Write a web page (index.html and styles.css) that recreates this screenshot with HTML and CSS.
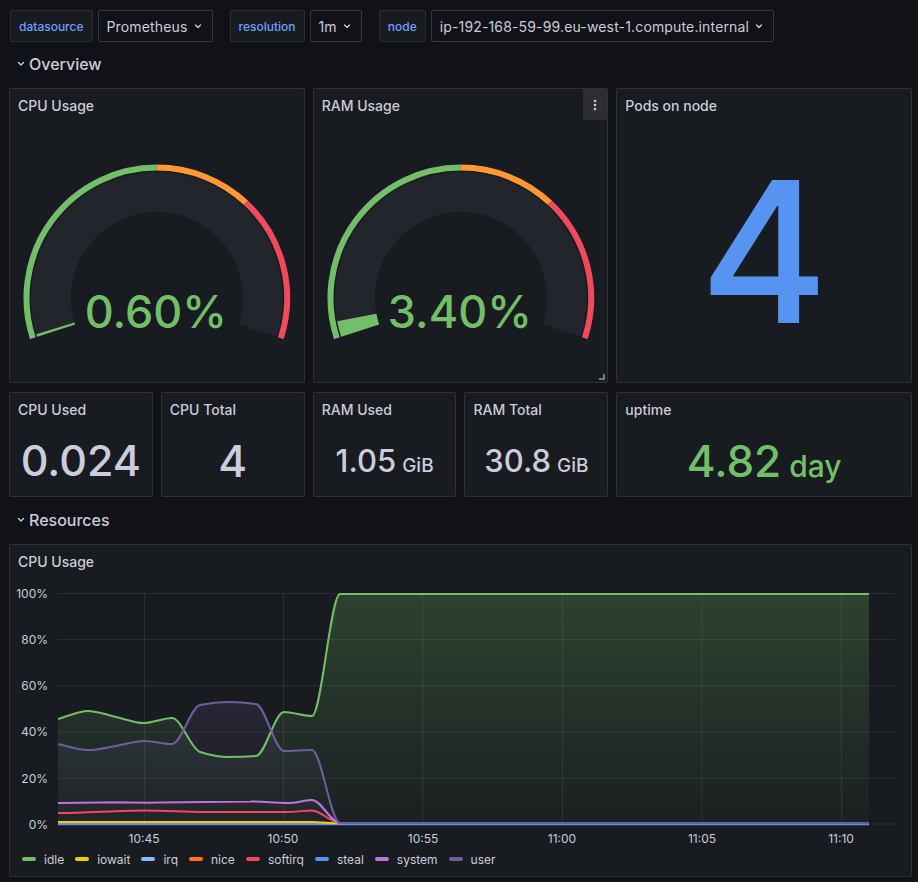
FILE: index.html
```html
<!DOCTYPE html>
<html>
<head>
<meta charset="utf-8">
<link rel="stylesheet" href="styles.css">
</head>
<body>
<div class="page">
  <div class="vars">
    <div class="var">
      <span class="var-label">datasource</span>
      <span class="var-select">Prometheus<svg class="chev" viewBox="0 0 12 12"><path d="M3.5 5 L6 7.5 L8.5 5"/></svg></span>
    </div>
    <div class="var">
      <span class="var-label">resolution</span>
      <span class="var-select">1m<svg class="chev" viewBox="0 0 12 12"><path d="M3.5 5 L6 7.5 L8.5 5"/></svg></span>
    </div>
    <div class="var">
      <span class="var-label">node</span>
      <span class="var-select">ip-192-168-59-99.eu-west-1.compute.internal<svg class="chev" viewBox="0 0 12 12"><path d="M3.5 5 L6 7.5 L8.5 5"/></svg></span>
    </div>
  </div>

  <div class="row-head"><svg class="row-chev" viewBox="0 0 8 8"><path d="M1.5 2.5 L4 5 L6.5 2.5"/></svg>Overview</div>

  <div class="grid">
    <div class="panel span2 big">
      <div class="panel-title">CPU Usage</div>
      <div class="panel-body">
        <svg class="gauge" viewBox="0 0 294 261">
          <path class="g-bg" d="M46.19 209.76 A106 106 0 1 1 247.81 209.76"/>
          <path class="g-val" d="M46.19 209.76 A106 106 0 0 1 45.47 207.47"/>
          <path class="g-th green" d="M22.89 217.33 A130.5 130.5 0 0 1 147 46.5"/>
          <path class="g-th orange" d="M147 46.5 A130.5 130.5 0 0 1 236.33 81.87"/>
          <path class="g-th red" d="M236.33 81.87 A130.5 130.5 0 0 1 271.11 217.33"/>
          <text class="g-text" x="146" y="207">0.60%</text>
        </svg>
      </div>
    </div>
    <div class="panel span2 big">
      <div class="panel-title">RAM Usage</div>
      <div class="panel-body">
        <svg class="gauge" viewBox="0 0 294 261">
          <path class="g-bg" d="M46.19 209.76 A106 106 0 1 1 247.81 209.76"/>
          <path class="g-val" d="M46.19 209.76 A106 106 0 0 1 42.83 196.60"/>
          <path class="g-th green" d="M22.89 217.33 A130.5 130.5 0 0 1 147 46.5"/>
          <path class="g-th orange" d="M147 46.5 A130.5 130.5 0 0 1 236.33 81.87"/>
          <path class="g-th red" d="M236.33 81.87 A130.5 130.5 0 0 1 271.11 217.33"/>
          <text class="g-text" x="146" y="207">3.40%</text>
        </svg>
      </div>
      <div class="menu-btn"><svg viewBox="0 0 24 31"><circle cx="12" cy="12" r="1.3"/><circle cx="12" cy="16" r="1.3"/><circle cx="12" cy="20" r="1.3"/></svg></div>
      <svg class="resize" viewBox="0 0 6 6"><path d="M5 0 V5 H0"/></svg>
    </div>
    <div class="panel span2 big">
      <div class="panel-title">Pods on node</div>
      <div class="panel-body"><span class="pods">4</span></div>
    </div>

    <div class="panel small">
      <div class="panel-title">CPU Used</div>
      <div class="panel-body"><div class="stat"><span class="num-s">0.024</span></div></div>
    </div>
    <div class="panel small">
      <div class="panel-title">CPU Total</div>
      <div class="panel-body"><div class="stat"><span class="num-l">4</span></div></div>
    </div>
    <div class="panel small">
      <div class="panel-title">RAM Used</div>
      <div class="panel-body"><div class="stat"><span class="num-m">1.05</span><span class="unit-m">GiB</span></div></div>
    </div>
    <div class="panel small">
      <div class="panel-title">RAM Total</div>
      <div class="panel-body"><div class="stat"><span class="num-m">30.8</span><span class="unit-m">GiB</span></div></div>
    </div>
    <div class="panel span2 small">
      <div class="panel-title">uptime</div>
      <div class="panel-body"><div class="stat green-text"><span class="num-l">4.82</span><span class="unit-l">day</span></div></div>
    </div>
  </div>

  <div class="row-head row-res"><svg class="row-chev" viewBox="0 0 8 8"><path d="M1.5 2.5 L4 5 L6.5 2.5"/></svg>Resources</div>

  <div class="panel chart-panel">
    <div class="panel-title">CPU Usage</div>
    <svg class="chart" viewBox="10 577 901 271">
      <defs>
        <linearGradient id="gGreen" gradientUnits="userSpaceOnUse" x1="0" y1="594" x2="0" y2="824">
          <stop offset="0" stop-color="#73bf69" stop-opacity="0.24"/>
          <stop offset="1" stop-color="#73bf69" stop-opacity="0.03"/>
        </linearGradient>
        <linearGradient id="gPurple" gradientUnits="userSpaceOnUse" x1="0" y1="594" x2="0" y2="824">
          <stop offset="0" stop-color="#705da0" stop-opacity="0.3"/>
          <stop offset="1" stop-color="#705da0" stop-opacity="0.02"/>
        </linearGradient>
        <linearGradient id="gLilac" gradientUnits="userSpaceOnUse" x1="0" y1="594" x2="0" y2="824">
          <stop offset="0" stop-color="#b877d9" stop-opacity="0.2"/>
          <stop offset="1" stop-color="#b877d9" stop-opacity="0.02"/>
        </linearGradient>
      </defs>
      <g class="grid-lines">
        <line x1="58" y1="593.5" x2="895" y2="593.5"/>
        <line x1="58" y1="639.6" x2="895" y2="639.6"/>
        <line x1="58" y1="685.8" x2="895" y2="685.8"/>
        <line x1="58" y1="731.9" x2="895" y2="731.9"/>
        <line x1="58" y1="778.1" x2="895" y2="778.1"/>
        <line x1="58" y1="824" x2="895" y2="824"/>
        <line x1="144.5" y1="593" x2="144.5" y2="824"/>
        <line x1="283.5" y1="593" x2="283.5" y2="824"/>
        <line x1="423" y1="593" x2="423" y2="824"/>
        <line x1="562.5" y1="593" x2="562.5" y2="824"/>
        <line x1="702" y1="593" x2="702" y2="824"/>
        <line x1="841.5" y1="593" x2="841.5" y2="824"/>
      </g>
      <g class="ylabels">
        <text x="48" y="593.5">100%</text>
        <text x="48" y="639.6">80%</text>
        <text x="48" y="685.8">60%</text>
        <text x="48" y="731.9">40%</text>
        <text x="48" y="778.1">20%</text>
        <text x="48" y="824">0%</text>
      </g>
      <g class="xlabels">
        <text x="144" y="838">10:45</text>
        <text x="283" y="838">10:50</text>
        <text x="423" y="838">10:55</text>
        <text x="562" y="838">11:00</text>
        <text x="702" y="838">11:05</text>
        <text x="841" y="838">11:10</text>
      </g>
      <path fill="url(#gGreen)" d="M58,719 C68,716.3 78,711 88,711 C97.3,711 106.7,715 116,717 C125.3,719 134.7,723 144,723 C153.3,723 162.7,718 172,718 C181.3,718 190.7,749.1 200,752 C209.3,754.9 218.7,757 228,757 C237.3,757 246.7,756.7 256,756 C265.3,755.3 274.7,712 284,712 C293.3,712 302.7,716 312,716 C321.3,716 330.7,594 340,594 L869,594 L869,824 L58,824 Z"/>
      <path fill="url(#gPurple)" d="M58,744 C68,746 78,750 88,750 C97.3,750 106.7,747.5 116,746 C125.3,744.5 134.7,741 144,741 C153.3,741 162.7,744 172,744 C181.3,744 190.7,706.9 200,705 C209.3,703.1 218.7,702 228,702 C237.3,702 246.7,702.7 256,704 C265.3,705.3 274.7,751 284,751 C293.3,751 302.7,750 312,750 C321.3,750 330.7,823 340,823 L340,824 L58,824 Z"/>
      <path fill="url(#gLilac)" d="M58,803 L100,802.5 C120,802 140,803 160,802.5 L250,801.5 C265,801 275,803.5 290,803 C300,802.5 305,800 312,800 C321,800 331,823 340,823 L340,824 L58,824 Z"/>
      <g class="series">
        <path stroke="#8ab8ff" d="M58,824 L869,824"/>
        <path stroke="#ff780a" d="M58,824 L869,824"/>
        <path stroke="#5794f2" d="M58,824.3 L869,824.3"/>
        <path stroke="#73bf69" d="M58,719 C68,716.3 78,711 88,711 C97.3,711 106.7,715 116,717 C125.3,719 134.7,723 144,723 C153.3,723 162.7,718 172,718 C181.3,718 190.7,749.1 200,752 C209.3,754.9 218.7,757 228,757 C237.3,757 246.7,756.7 256,756 C265.3,755.3 274.7,712 284,712 C293.3,712 302.7,716 312,716 C321.3,716 330.7,594 340,594 L869,594"/>
        <path stroke="#f2cc0c" d="M58,822 L312,822 C322,822 330,823.3 340,823.3"/>
        <path stroke="#f2495c" d="M58,813 C90,812.5 120,810.5 144,810.5 C165,810.5 185,812 200,812 L284,812 C295,812 305,810.5 312,810.5 C321,810.5 331,823 340,823"/>
        <path stroke="#b877d9" d="M58,803 L100,802.5 C120,802 140,803 160,802.5 L250,801.5 C265,801 275,803.5 290,803 C300,802.5 305,800 312,800 C321,800 331,823 340,823"/>
        <path stroke="#705da0" d="M58,744 C68,746 78,750 88,750 C97.3,750 106.7,747.5 116,746 C125.3,744.5 134.7,741 144,741 C153.3,741 162.7,744 172,744 C181.3,744 190.7,706.9 200,705 C209.3,703.1 218.7,702 228,702 C237.3,702 246.7,702.7 256,704 C265.3,705.3 274.7,751 284,751 C293.3,751 302.7,750 312,750 C321.3,750 330.7,823 340,823 L869,823"/>
      </g>
    </svg>
    <div class="legend">
      <span class="leg"><i class="mk mk-idle"></i>idle</span>
      <span class="leg"><i class="mk mk-iowait"></i>iowait</span>
      <span class="leg"><i class="mk mk-irq"></i>irq</span>
      <span class="leg"><i class="mk mk-nice"></i>nice</span>
      <span class="leg"><i class="mk mk-softirq"></i>softirq</span>
      <span class="leg"><i class="mk mk-steal"></i>steal</span>
      <span class="leg"><i class="mk mk-system"></i>system</span>
      <span class="leg"><i class="mk mk-user"></i>user</span>
    </div>
  </div>
</div>
</body>
</html>
```
FILE: styles.css
```css
* { box-sizing: border-box; }
html, body { margin: 0; }
body {
  background: #111217;
  color: #ccccdc;
  font-family: Inter, "Noto Sans", sans-serif;
  width: 918px;
  height: 882px;
  overflow: hidden;
}
.page { padding: 10px 6px 0 9px; }

.vars { display: flex; height: 32px; padding-left: 1px; gap: 17px; }
.var { display: flex; gap: 5px; }
.var-label {
  display: flex; align-items: center;
  padding: 0 8px;
  background: #181b1f;
  border: 1px solid rgba(204, 204, 220, 0.1);
  border-radius: 2px;
  color: #6e9fff;
  font-size: 12px;
  font-weight: 500;
}
.var-select {
  display: flex; align-items: center;
  padding: 0 8px;
  border: 1px solid rgba(204, 204, 220, 0.2);
  border-radius: 2px;
  font-size: 14px;
  letter-spacing: 0.15px;
}
.chev { width: 12px; height: 12px; margin-left: 4px; }
.chev path, .row-chev path { fill: none; stroke: #ccccdc; stroke-width: 1.3; stroke-linecap: round; stroke-linejoin: round; }

.row-head {
  display: flex; align-items: center;
  height: 32px;
  margin: 6px 0 8px;
  padding-left: 8px;
  font-size: 16px;
  font-weight: 500;
}
.row-res { margin-top: 7px; }
.row-chev { width: 8px; height: 8px; margin-right: 4px; }

.grid {
  display: grid;
  grid-template-columns: repeat(6, 1fr);
  column-gap: 8px;
  row-gap: 9px;
}
.panel {
  position: relative;
  display: flex; flex-direction: column;
  background: #181b1f;
  border: 1px solid rgba(204, 204, 220, 0.12);
  border-radius: 2px;
}
.span2 { grid-column: span 2; }
.big { height: 295px; }
.small { height: 105px; }
.panel-title {
  flex: none;
  height: 32px; line-height: 33px;
  padding-left: 8px;
  font-size: 14px;
  font-weight: 500;
}
.panel-body {
  flex: 1;
  display: flex; align-items: center; justify-content: center;
  min-height: 0;
}
.gauge { width: 100%; height: 100%; display: block; }
.g-bg { fill: none; stroke: #22252b; stroke-width: 40; }
.g-val { fill: none; stroke: #73bf69; stroke-width: 40; }
.g-th { fill: none; stroke-width: 6; }
.green { stroke: #73bf69; }
.orange { stroke: #ff9830; }
.red { stroke: #f2495c; }
.g-text { fill: #73bf69; font-family: Inter, sans-serif; font-size: 45px; font-weight: 500; text-anchor: middle; }

.menu-btn {
  position: absolute; top: 0; right: 0;
  width: 24px; height: 31px;
  background: #2c2e34;
  border-radius: 2px;
}
.menu-btn svg { width: 24px; height: 31px; display: block; fill: #ccccdc; }
.resize { position: absolute; right: 2px; bottom: 2px; width: 6px; height: 6px; }
.resize path { fill: none; stroke: #9a9aa8; stroke-width: 1.5; }

.pods { color: #5794f2; font-size: 196px; font-weight: 500; line-height: 1; }
.stat { line-height: 1; white-space: nowrap; font-weight: 500; }
.num-s { font-size: 43px; }
.num-l { font-size: 44px; }
.num-m { font-size: 31px; }
.unit-m { font-size: 19px; margin-left: 6px; }
.unit-l { font-size: 30px; margin-left: 8px; }
.green-text { color: #73bf69; }

.chart-panel { height: 333px; }
.chart { display: block; width: 901px; height: 271px; }
.grid-lines line { stroke: rgba(204, 204, 220, 0.1); stroke-width: 1; }
.ylabels text { fill: #ccccdc; font-size: 12px; text-anchor: end; dominant-baseline: central; font-family: Inter, sans-serif; }
.xlabels text { fill: #ccccdc; font-size: 12px; text-anchor: middle; dominant-baseline: central; font-family: Inter, sans-serif; }
.series path { fill: none; stroke-width: 2; stroke-linejoin: round; stroke-linecap: butt; }

.legend {
  display: flex; align-items: center;
  height: 22px;
  padding-left: 12px;
  gap: 11px;
  font-size: 12px;
}
.leg { display: flex; align-items: center; }
.mk { display: inline-block; width: 14px; height: 4px; border-radius: 2px; margin-right: 8px; }
.mk-idle { background: #73bf69; }
.mk-iowait { background: #f2cc0c; }
.mk-irq { background: #8ab8ff; }
.mk-nice { background: #ff780a; }
.mk-softirq { background: #f2495c; }
.mk-steal { background: #5794f2; }
.mk-system { background: #b877d9; }
.mk-user { background: #705da0; }
```
